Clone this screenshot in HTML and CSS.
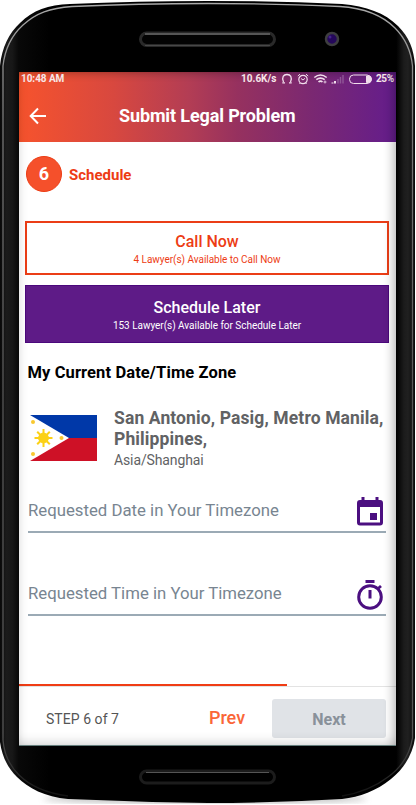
FILE: index.html
```html
<!DOCTYPE html>
<html lang="en">
<head>
<meta charset="utf-8">
<title>Submit Legal Problem</title>
<link rel="stylesheet" href="styles.css">
</head>
<body>
<div class="phone">
  <svg class="shell" width="416" height="805" viewBox="0 0 416 805" aria-hidden="true">
    <defs>
      <linearGradient id="body" x1="0" x2="1" y1="0" y2="0">
        <stop offset="0" stop-color="#080808"/><stop offset=".015" stop-color="#1b1b1b"/>
        <stop offset=".03" stop-color="#171717"/><stop offset=".045" stop-color="#080808"/>
        <stop offset=".12" stop-color="#000"/><stop offset=".955" stop-color="#000"/>
        <stop offset=".973" stop-color="#1b1b1b"/><stop offset=".983" stop-color="#202020"/><stop offset="1" stop-color="#090909"/>
      </linearGradient>
      <linearGradient id="rim" x1="0" x2="0" y1="0" y2="1">
        <stop offset="0" stop-color="#aaa"/><stop offset=".15" stop-color="#777"/>
        <stop offset=".5" stop-color="#555"/><stop offset=".92" stop-color="#555"/><stop offset="1" stop-color="#111"/>
      </linearGradient>
      <filter id="soft"><feGaussianBlur stdDeviation="3"/></filter>
    </defs>
    <ellipse cx="205" cy="799" rx="162" ry="4" fill="#777" opacity=".55" filter="url(#soft)"/>
    <path fill="url(#body)" d="M0 66C2 47 9 33 20 23C33 10 48 5 70 4Q138 1 208 1Q278 1 342 4C366 6 385 13 398 26C409 37 414 49 415 66V738C413 753 405 768 391 779C376 791 360 797 342 799Q275 803 208 803Q138 802 68 799C45 797 28 788 17 777C7 767 2 756 0 742Z"/>
    <path fill="none" stroke="url(#rim)" stroke-width="1.3" d="M3 66C5 48 12 35 23 25C36 13 50 8 72 6.500Q138 3.500 208 3.500Q278 3.500 340 6.500C364 8 382 15 395 28C406 39 411 51 412.500 66V738C410 753 402 767 388 777C375 787 360 793 342 796M68 796C45 793 30 786 19 775C9 765 4 754 3 740V66"/>
    <rect x="140.500" y="33" width="134" height="12.500" rx="6.200" fill="#030303" stroke="#292929" stroke-width="3"/>
    <path d="M145 34H270" stroke="#565656" stroke-width="2"/><path d="M145 45.500H270" stroke="#484848"/>
    <rect x="140.500" y="771" width="134" height="12" rx="6" fill="#000" stroke="#1c1c1c" stroke-width="3"/>
    <path d="M146 772.500H269" stroke="#555"/>
    <circle cx="332" cy="39" r="6" fill="#24075a" stroke="#3e3e40" stroke-width="2.500"/>
    <circle cx="330" cy="37" r="1.500" fill="#45238a"/>
  </svg>
  <main class="screen">
    <header class="appbar">
      <div class="status">
        <span class="clock">10:48 AM</span>
        <span class="rate">10.6K/s</span>
        <svg class="status-icons" width="91" height="12" viewBox="0 0 91 12" fill="none" stroke="#f1deec">
          <path d="M2.500 9C.5 4 2.500 1.500 6 1.500S11.500 4 9.500 9M1.300 9.800H4M8 9.800H10.700" stroke-width="1.300"/>
          <circle cx="22" cy="6.500" r="4.200" stroke-width="1.200"/><path d="M20 5.500L22 7L24 5.300M16.800 3L19 1.200M25 1.200L27.200 3M18.500 11L19.300 10M25.500 11L24.700 10"/>
          <path d="M33.300 4.500Q39.500-.5 45.700 4.500M35.300 6.700Q39.500 3.500 43.700 6.700M37.500 9Q39.500 7.200 41.500 9" stroke-width="1.600"/><path d="M42.500 9H45.500M44 7.500V10.500" stroke-width=".8"/>
          <path d="M51.500 10.500V9.500M54 10.500V8" stroke-width="2"/><path d="M57 10.500V6M59.500 10.500V4M62 10.500V2" stroke="#8f5797" stroke-width="1.400"/>
          <rect x="68.500" y="2" width="21.500" height="8.500" rx="4"/><path d="M85.500 3H87.500Q90.500 3 90.500 6.200T87.500 9.500H85.500Z" fill="#f1deec"/>
        </svg>
        <span class="battery">25%</span>
      </div>
      <div class="titlebar">
        <svg class="back" width="18" height="18" viewBox="0 0 18 18" fill="none" stroke="#fff" stroke-width="2"><path d="M17 9H2M9 1.500L1.700 9L9 16.500"/></svg>
        <h1>Submit Legal Problem</h1>
      </div>
    </header>
    <section class="content">
      <div class="step-heading"><span class="step-number">6</span><h2>Schedule</h2></div>
      <button class="option call"><strong>Call Now</strong><small>4 Lawyer(s) Available to Call Now</small></button>
      <button class="option later"><strong>Schedule Later</strong><small>153 Lawyer(s) Available for Schedule Later</small></button>
      <h3>My Current Date/Time Zone</h3>
      <div class="location">
        <svg class="flag" width="67" height="46" viewBox="0 0 67 46">
          <path fill="#0038a8" d="M0 0H67V23H0Z"/><path fill="#ce1126" d="M0 23H67V46H0Z"/><path fill="#fff" d="M0 0L39 23L0 46Z"/>
          <g fill="#fcd116" stroke="#fcd116"><circle cx="13.500" cy="23" r="4.900"/><path stroke-width="2" d="M13.500 14V32M4.500 23H22.500M7.200 16.700L19.800 29.300M19.800 16.700L7.200 29.300"/></g>
          <g fill="#f8c830"><circle cx="3" cy="7" r="2"/><circle cx="3" cy="39" r="2"/><circle cx="31.500" cy="23" r="2"/></g>
        </svg>
        <div class="place"><strong>San Antonio, Pasig, Metro Manila,<br>Philippines,</strong><span>Asia/Shanghai</span></div>
      </div>
      <div class="field date"><span>Requested Date in Your Timezone</span>
        <svg width="26" height="29" viewBox="0 0 26 29"><path fill="#4b0f80" fill-rule="evenodd" d="M4.500 0H7.500V3H18.500V0H21.500V3H23Q26 3 26 6V25.500Q26 28.500 23 28.500H3Q0 28.500 0 25.500V6Q0 3 3 3H4.500ZM3 10V25.500H23V10ZM13 16H20V23H13Z"/></svg>
      </div>
      <div class="field time"><span>Requested Time in Your Timezone</span>
        <svg width="26" height="30" viewBox="0 0 26 30" fill="none" stroke="#4b0f80" stroke-width="3"><path d="M8.500 1.500H17.500M13 10V18.500"/><circle cx="13" cy="17" r="11.300"/><path d="M20.500 9L24 6" stroke-width="2.800"/></svg>
      </div>
    </section>
    <footer>
      <div class="progress"><div class="progress-value"></div></div>
      <div class="actions"><span class="count">STEP 6 of 7</span><button class="prev">Prev</button><button class="next">Next</button></div>
    </footer>
  </main>
</div>
</body>
</html>
```
FILE: styles.css
```css
* { box-sizing: border-box; }
body { margin: 0; background: #fff; font-family: Roboto, sans-serif; }
h1, h2, h3 { margin: 0; font-weight: 700; }
button { font: inherit; border: 0; padding: 0; }
svg { flex: none; }
span, strong, small, h1, h2, h3 { white-space: nowrap; }
.phone { position: relative; width: 416px; height: 805px; padding: 72px 20px 59px 19px; overflow: hidden; }
.shell { position: absolute; left: 0; top: 0; }
.screen { position: relative; height: 674px; display: flex; flex-direction: column; background: #fff; }
.screen::after { content: ""; position: absolute; inset: 0; pointer-events: none; box-shadow: inset -12px 0 11px -10px rgba(0,0,0,.32), inset 8px 0 10px -8px rgba(0,0,0,.16), inset 0 -12px 12px -10px rgba(0,0,0,.18); border-bottom: 1px solid #647d7b; }
.appbar { height: 70px; background: linear-gradient(90deg, #f6532d 0%, #d8483f 25%, #b33d54 45%, #96315f 58%, #7a2872 78%, #641d8c 100%); color: #fff; box-shadow: inset 0 8px 8px -7px rgba(0,0,0,.3); }
.status { height: 13px; display: flex; align-items: center; font-size: 10px; font-weight: 700; color: #f7e7e9; }
.clock { margin-left: 2px; width: 43px; letter-spacing: -.05px; }
.rate { margin-left: 177px; width: 34px; letter-spacing: 0; }
.status-icons { margin-left: 6px; }
.battery { margin-left: 4px; letter-spacing: -.4px; }
.titlebar { height: 57px; display: flex; align-items: center; padding: 4px 0 0 10px; }
.titlebar h1 { margin-left: 72px; font-size: 18px; line-height: 22px; letter-spacing: -.13px; }
.content { height: 541px; padding: 13px 7px 0 6px; }
.step-heading { height: 37px; display: flex; align-items: center; color: #ed3c14; }
.step-number { width: 36px; height: 36px; margin-left: 1px; border: 1px solid #ed3c14; border-radius: 50%; background: #f5502b; color: #fff; font-size: 18px; font-weight: 700; display: grid; place-items: center; }
.step-heading h2 { margin: 2px 0 0 7px; font-size: 15px; }
.option { width: 364px; display: flex; flex-direction: column; align-items: center; }
.option strong { font-size: 16px; line-height: 19px; font-weight: 500; }
.option small { font-size: 10px; line-height: 14px; }
.call { margin-top: 29px; height: 54px; border: 2px solid #eb3d16; background: #fff; color: #ed3c14; padding-top: 9px; }
.call small { line-height: 17px; letter-spacing: -.03px; }
.later { margin-top: 10px; height: 58px; border: 1px solid #4b087c; background: #5e1b87; color: #fff; padding-top: 12px; }
.later small { line-height: 17px; letter-spacing: -.03px; }
h3 { margin: 20px 0 0 2.5px; font-size: 16.5px; line-height: 19px; letter-spacing: .11px; color: #000; }
.location { display: flex; margin: 26px 0 0 5px; }
.flag { margin: 7px 0 0; }
.place { display: flex; flex-direction: column; margin-left: 17px; color: #616264; }
.place strong { font-size: 17.5px; line-height: 21px; font-weight: 700; letter-spacing: .12px; }
.place span { font-size: 14px; line-height: 21px; letter-spacing: -.12px; }
.field { width: 358px; margin-left: 3px; border-bottom: 2px solid #9baab5; display: flex; justify-content: space-between; padding-right: 3px; color: #788591; font-size: 16.75px; line-height: 20px; }
.field svg { margin-top: 1px; }
.date { height: 37px; margin-top: 25px; }
.date span { margin-top: 4px; }
.time { height: 37px; margin-top: 46px; }
.time span { margin-top: 4px; }
footer { height: 63px; padding-top: 1px; }
.progress { height: 3px; border-bottom: 1px solid #e3e3e3; }
.progress-value { width: 268px; height: 2px; background: #f03d15; }
.actions { display: flex; align-items: flex-start; padding: 12px 10px 0 27px; }
.count { width: 75px; margin-top: 11px; font-size: 14px; line-height: 18px; color: #555; letter-spacing: .05px; }
.prev { margin: 7px 0 0 87px; width: 38px; font-size: 18px; line-height: 23px; font-weight: 500; color: #fa6638; background: none; }
.next { margin-left: 26px; width: 114px; height: 39px; border-radius: 3px; background: #e0e3e7; color: #89919a; font-size: 16px; font-weight: 700; padding-top: 2px; }
```
